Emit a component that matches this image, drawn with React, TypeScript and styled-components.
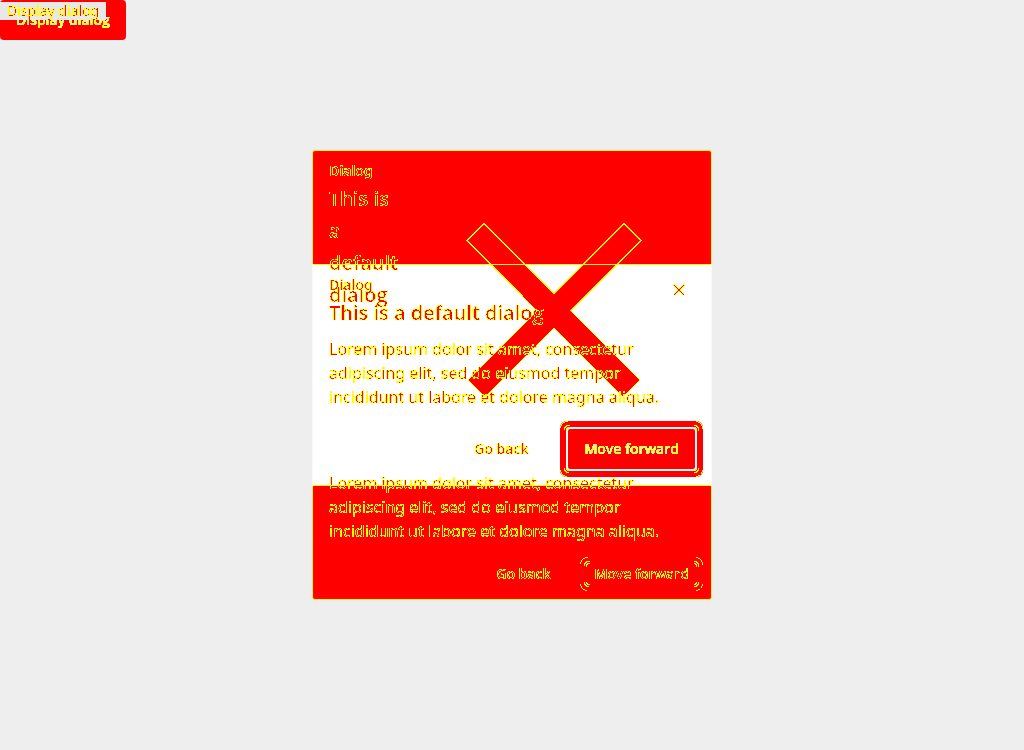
import React from 'react';
import styled, { createGlobalStyle } from 'styled-components';

const RED = '#ff0000';
const YELLOW = '#ffff00';
const PALE = '#eeeeee';
const TEXT_FONT = "'Noto Sans', 'Open Sans', sans-serif";
const STRONG_FONT = "'Open Sans', 'Noto Sans', sans-serif";

const GlobalStyle = createGlobalStyle`
  *, *::before, *::after { box-sizing: border-box; }
  body {
    margin: 0;
    background: ${PALE};
    color: ${RED};
    font-family: ${TEXT_FONT};
  }
  h2, p { margin: 0; }
`;

const Page = styled.main`
  position: relative;
  min-height: 100vh;
  display: grid;
  place-items: center;
`;

/* Glyph edges become yellow, glyph cores red or pale. */
const Mark = styled.span<{ $core?: 'red' | 'pale' }>`
  filter: url(#mark-${(p) => p.$core ?? 'red'});
  display: inline-block;
`;

const Trigger = styled.button`
  position: absolute;
  top: 0;
  left: 0;
  height: 40px;
  padding: 0 16px;
  border: 0;
  border-radius: 4px;
  background: ${RED};
  color: ${RED};
  font: 600 14px/20px ${STRONG_FONT};
  white-space: nowrap;
`;

const PlainTrigger = styled.button`
  position: absolute;
  top: 2px;
  left: 0;
  height: 18px;
  padding: 0 7px;
  border: 0;
  background: #e8e8e8;
  color: ${RED};
  font: 400 14px/18px ${TEXT_FONT};
  white-space: nowrap;
`;

const Panel = styled.section<{ $tall?: boolean }>`
  grid-area: 1 / 1;
  position: ${(p) => (p.$tall ? 'static' : 'relative')};
  width: 100%;
  max-width: 400px;
  padding: 10px 0 ${(p) => (p.$tall ? 8 : 16)}px;
  border-radius: ${(p) => (p.$tall ? 3 : 0)}px;
  border: 1px solid ${(p) => (p.$tall ? YELLOW : '#f8f8f8')};
  background: ${(p) => (p.$tall ? RED : '#ffffff')};

  &::after {
    content: '';
    display: ${(p) => (p.$tall ? 'none' : 'block')};
    position: absolute;
    inset: -1px 0;
    z-index: 3;
    border-top: 1px solid ${YELLOW};
    border-bottom: 1px solid ${YELLOW};
    pointer-events: none;
  }
`;

const Header = styled.header<{ $level: number }>`
  position: relative;
  z-index: ${(p) => p.$level};
  display: flex;
  justify-content: space-between;
  padding: 0 16px;
`;

const Titles = styled.div<{ $narrow?: boolean }>`
  width: ${(p) => (p.$narrow ? '72px' : 'auto')};
`;

const Label = styled.p`
  margin-bottom: 2px;
  font-family: ${TEXT_FONT};
  font-size: 14px;
  line-height: 20px;
  font-weight: 600;
`;

const Title = styled.h2`
  font-family: ${STRONG_FONT};
  font-size: 20px;
  line-height: 32px;
  font-weight: 600;
`;

const CloseButton = styled.button<{ $large?: boolean }>`
  flex: none;
  display: grid;
  place-items: center;
  width: ${(p) => (p.$large ? '282px' : '32px')};
  height: ${(p) => (p.$large ? '300px' : '30px')};
  padding: 0;
  border: 0;
  background: transparent;
`;

const Body = styled.p<{ $level: number; $tall?: boolean }>`
  position: relative;
  z-index: ${(p) => p.$level};
  padding: ${(p) => (p.$tall ? 10 : 8)}px 16px 0;
  font-size: 16px;
  line-height: 24px;
`;

const Footer = styled.footer<{ $level: number; $tall?: boolean }>`
  position: relative;
  z-index: ${(p) => p.$level};
  display: flex;
  justify-content: flex-end;
  align-items: center;
  gap: ${(p) => (p.$tall ? 16 : 24)}px;
  padding: ${(p) => (p.$tall ? '14px 8px 0' : '20px 16px 0')};
`;

const Action = styled.button<{ $focused?: boolean; $compact?: boolean }>`
  position: relative;
  height: ${(p) => (p.$compact ? 34 : 40)}px;
  padding: 0 ${(p) => (p.$compact ? 14 : 16)}px;
  border: 0;
  border-radius: 2px;
  background: ${(p) => (p.$focused ? RED : 'transparent')};
  box-shadow: ${(p) => (p.$focused ? `0 0 0 2px #ffffff, 0 0 0 8px ${RED}` : 'none')};
  color: ${RED};
  font: 600 14px/20px ${STRONG_FONT};
  white-space: nowrap;
`;

const Corner = styled.svg<{ $turn: number; $inset: number }>`
  position: absolute;
  ${(p) => (p.$turn === 0 || p.$turn === 270 ? 'left' : 'right')}: ${(p) => p.$inset}px;
  ${(p) => (p.$turn < 180 ? 'top' : 'bottom')}: ${(p) => p.$inset}px;
  transform: rotate(${(p) => p.$turn}deg);
`;

const OUTER_ARC = 'M.5 7V5.500L2.500 2.500L5.500 .5H7.500';
const INNER_ARCS = 'M4.500 9V7L7 4.500H9.500M6.500 9.500V8L8 6.500H9.500';

function Corners({ inset, d }: { inset: number; d: string }) {
  return (
    <>
      {[0, 90, 180, 270].map((turn) => (
        <Corner key={turn} $turn={turn} $inset={inset} width="10" height="10" viewBox="0 0 10 10" fill="none" stroke={YELLOW} shapeRendering="crispEdges" aria-hidden="true">
          <path d={d} />
        </Corner>
      ))}
    </>
  );
}

function BigCross() {
  return (
    <svg width="176" height="176" viewBox="0 0 176 176" aria-hidden="true">
      <path d="M18 .8L88 70.500L158 .8L175.400 17.500L105 88L174 157L157 174L88 105L19 174L2 157L71 88L.6 17.500Z" fill={RED} stroke={YELLOW} strokeWidth="1.400" shapeRendering="crispEdges" />
    </svg>
  );
}

function SmallCross() {
  return (
    <svg width="12" height="12" viewBox="0 0 12 12" fill="none" shapeRendering="crispEdges" aria-hidden="true">
      <path d="M1 1L11 11M11 1L1 11" stroke={YELLOW} strokeWidth="2" />
      <path d="M1 1L11 11M11 1L1 11" stroke={RED} />
    </svg>
  );
}

function MarkFilter({ id, core }: { id: string; core: string }) {
  return (
    <filter id={id} x="-5%" y="-5%" width="110%" height="110%" colorInterpolationFilters="sRGB">
      <feComponentTransfer in="SourceAlpha" result="edge">
        <feFuncA type="discrete" tableValues="0 1 1 1 1 1 1 1 1 1 1 1 1 1 1 1 1 1 1 1" />
      </feComponentTransfer>
      <feFlood floodColor={YELLOW} />
      <feComposite operator="in" in2="edge" result="yellow" />
      <feComponentTransfer in="SourceAlpha" result="center">
        <feFuncA type="discrete" tableValues="0 0 0 0 0 0 0 0 0 0 0 0 0 0 0 0 0 0 1 1" />
      </feComponentTransfer>
      <feFlood floodColor={core} />
      <feComposite operator="in" in2="center" result="middle" />
      <feMerge>
        <feMergeNode in="yellow" />
        <feMergeNode in="middle" />
      </feMerge>
    </filter>
  );
}

const Defs = styled.svg`
  position: absolute;
`;

const BODY = 'Lorem ipsum dolor sit amet, consectetur adipiscing elit, sed do eiusmod tempor incididunt ut labore et dolore magna aliqua.';

export default function App() {
  return (
    <Page>
      <GlobalStyle />
      <Defs width="0" height="0" aria-hidden="true">
        <MarkFilter id="mark-red" core={RED} />
        <MarkFilter id="mark-pale" core={PALE} />
      </Defs>
      <Trigger type="button"><Mark $core="pale">Display dialog</Mark></Trigger>
      <PlainTrigger type="button"><Mark>Display dialog</Mark></PlainTrigger>

      <Panel $tall>
        <Header $level={1}>
          <Titles $narrow>
            <Label><Mark>Dialog</Mark></Label>
            <Title><Mark>This is a default dialog</Mark></Title>
          </Titles>
          <CloseButton $large type="button" aria-label="Close"><BigCross /></CloseButton>
        </Header>
        <Body $level={1} $tall><Mark>{BODY}</Mark></Body>
        <Footer $level={1} $tall>
          <Action type="button" $compact><Mark>Go back</Mark></Action>
          <Action type="button" $compact>
            <Mark>Move forward</Mark>
            <Corners inset={0} d={OUTER_ARC} />
            <Corners inset={0} d={INNER_ARCS} />
          </Action>
        </Footer>
      </Panel>

      <Panel>
        <Header $level={2}>
          <Titles>
            <Label><Mark>Dialog</Mark></Label>
            <Title><Mark>This is a default dialog</Mark></Title>
          </Titles>
          <CloseButton type="button" aria-label="Close"><SmallCross /></CloseButton>
        </Header>
        <Body $level={2}><Mark>{BODY}</Mark></Body>
        <Footer $level={2}>
          <Action type="button"><Mark>Go back</Mark></Action>
          <Action type="button" $focused>
            <Mark $core="pale">Move forward</Mark>
            <Corners inset={-8} d={OUTER_ARC} />
            <Corners inset={-8} d={INNER_ARCS} />
          </Action>
        </Footer>
      </Panel>
    </Page>
  );
}
